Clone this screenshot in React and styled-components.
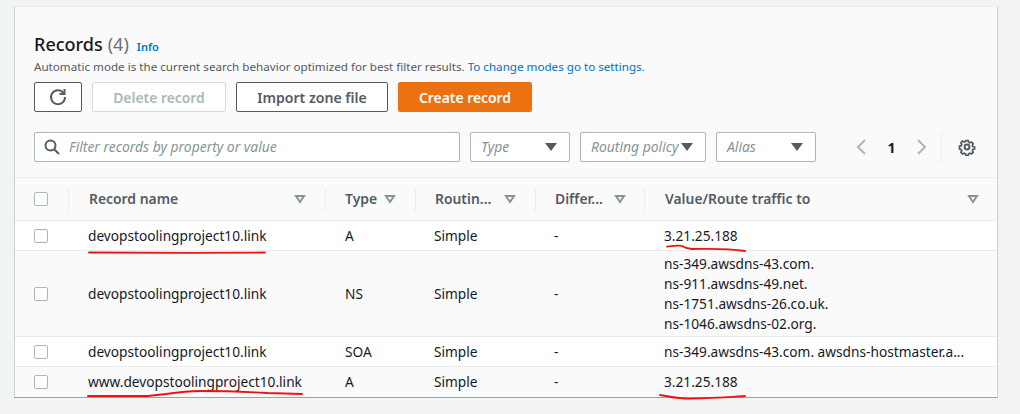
import React from "react";
import styled, { createGlobalStyle } from "styled-components";

const Global = createGlobalStyle`
  html, body { margin: 0; padding: 0; background: #f2f3f3; }
  body { font-family: "Noto Sans", "Open Sans", sans-serif; color: #16191f; }
  * { box-sizing: border-box; }
`;

const Page = styled.div`
  position: relative;
  width: 1020px;
  height: 414px;
  padding: 6px 22px 0 14px;
  overflow: hidden;
`;
const Card = styled.section`
  height: 392px;
  background: #fafafa;
  border-left: 1px solid #ccd2d2;
  border-right: 1px solid #ccd2d2;
  border-top: 1px solid #eaeded;
  border-bottom: 1px solid #9aa5a6;
`;
const Head = styled.header`
  padding: 25px 19px 0 19px;
`;
const Title = styled.div`
  display: flex;
  align-items: baseline;
  height: 24px;
  font-size: 18px;
  font-weight: 500;
  line-height: 24px;
`;
const Count = styled.span`
  margin-left: 5px;
  font-weight: 400;
  color: #687078;
`;
const InfoLink = styled.a`
  margin-left: 8px;
  font-size: 11px;
  font-weight: 600;
  color: #0073bb;
`;
const Desc = styled.p`
  margin: 2px 0 0;
  height: 17px;
  font-size: 11.63px;
  line-height: 17px;
  color: #545b64;
`;
const Anchor = styled.a`
  color: #0073bb;
`;
const Buttons = styled.div`
  display: flex;
  gap: 10px;
  margin-top: 7px;
`;
const Btn = styled.button`
  height: 30px;
  width: ${(p) => p.$w}px;
  padding: 0;
  display: flex;
  align-items: center;
  justify-content: center;
  border-radius: 2px;
  border: 1px solid ${(p) => (p.$variant === "primary" ? "#ec7211" : p.$variant === "disabled" ? "#d5dbdb" : "#545b64")};
  background: ${(p) => (p.$variant === "primary" ? "#ec7211" : "#fff")};
  color: ${(p) => (p.$variant === "primary" ? "#fff" : p.$variant === "disabled" ? "#aab7b8" : "#545b64")};
  font-family: inherit;
  font-size: ${(p) => p.$size || 13.9}px;
  font-weight: 600;
`;
const Filters = styled.div`
  display: flex;
  align-items: center;
  margin-top: 20px;
  gap: 10px;
`;
const Search = styled.div`
  flex: none;
  display: flex;
  align-items: center;
  width: 426px;
  height: 30px;
  padding-left: 9px;
  gap: 9px;
  background: #fff;
  border: 1px solid #aab7b8;
  border-radius: 2px;
`;
const Placeholder = styled.span`
  padding-bottom: 2px;
  font-size: 13.9px;
  font-style: italic;
  color: #879596;
  white-space: nowrap;
`;
const Select = styled.div`
  flex: none;
  display: flex;
  align-items: center;
  justify-content: space-between;
  width: ${(p) => p.$w}px;
  height: 30px;
  padding: 0 12px 0 10px;
  background: #fff;
  border: 1px solid #aab7b8;
  border-radius: 2px;
`;
const Caret = styled.svg`
  flex: none;
  width: 12px;
  height: 8px;
  fill: #545b64;
`;
const Pager = styled.div`
  flex: none;
  display: flex;
  align-items: center;
  height: 30px;
  margin-left: 29px;
`;
const PageNum = styled.span`
  width: 45px;
  text-align: center;
  font-size: 14px;
  font-weight: 700;
`;
const Divider = styled.span`
  width: 1px;
  height: 30px;
  background: #eaeded;
  margin: 0 16px 0 13px;
`;
const Table = styled.div`
  margin-top: 15px;
  border-top: 1px solid #eaeded;
`;
const Row = styled.div`
  display: grid;
  grid-template-columns: 53px 257px 90px 120px 109px 1fr;
  align-items: center;
  height: ${(p) => p.$h}px;
  background: ${(p) => (p.$white ? "#fff" : "transparent")};
  border-bottom: ${(p) => (p.$last ? "none" : "1px solid #eaeded")};
  font-size: 13.7px;
  color: #16191f;
`;
const CheckCell = styled.div`
  padding-left: 19px;
  display: flex;
  align-items: center;
`;
const Check = styled.span`
  display: block;
  width: 14px;
  height: 14px;
  background: #fff;
  border: 1px solid #aab7b8;
  border-radius: 2px;
`;
const HeadCell = styled.div`
  display: flex;
  align-items: center;
  justify-content: space-between;
  height: 21px;
  padding: 0 ${(p) => p.$right}px 0 ${(p) => p.$left}px;
  border-left: 1px solid #eaeded;
  font-size: 13.9px;
  font-weight: 600;
  color: #545b64;
  white-space: nowrap;
`;
const HeadLabel = styled.span`
  padding-bottom: 2px;
`;
const Cell = styled.div`
  padding-left: ${(p) => p.$left}px;
  white-space: nowrap;
`;
const Line = styled.div`
  line-height: 20px;
`;
const Ink = styled.svg`
  position: absolute;
  left: 0;
  top: 0;
  width: 1020px;
  height: 414px;
  pointer-events: none;
  fill: none;
  stroke: #ee1111;
  stroke-width: 1.8;
  stroke-linecap: round;
`;

const SortIcon = () => (
  <svg width="12" height="10" viewBox="0 0 12 10" fill="none" stroke="#879596" strokeWidth="2">
    <path d="M2 2h8L6 8z" />
  </svg>
);
const DownCaret = () => (
  <Caret viewBox="0 0 12 8"><path d="M0 0h12L6 8z" /></Caret>
);

const columns = [
  { label: "Record name", left: 20, right: 19 },
  { label: "Type", left: 19, right: 19 },
  { label: "Routin...", left: 19, right: 19 },
  { label: "Differ...", left: 19, right: 18 },
  { label: "Value/Route traffic to", left: 20, right: 18 },
];
const rows = [
  { name: "devopstoolingproject10.link", type: "A", value: ["3.21.25.188"], h: 30, white: true },
  { name: "devopstoolingproject10.link", type: "NS", value: ["ns-349.awsdns-43.com.", "ns-911.awsdns-49.net.", "ns-1751.awsdns-26.co.uk.", "ns-1046.awsdns-02.org."], h: 86 },
  { name: "devopstoolingproject10.link", type: "SOA", value: ["ns-349.awsdns-43.com. awsdns-hostmaster.a..."], h: 30, white: true },
  { name: "www.devopstoolingproject10.link", type: "A", value: ["3.21.25.188"], h: 29, last: true },
];

export default function App() {
  return (
    <>
      <Global />
      <Page>
        <Card>
          <Head>
            <Title>Records<Count>(4)</Count><InfoLink>Info</InfoLink></Title>
            <Desc>Automatic mode is the current search behavior optimized for best filter results. <Anchor>To change modes go to settings.</Anchor></Desc>
            <Buttons>
              <Btn $w={48} aria-label="Refresh">
                <svg width="18" height="18" viewBox="0 0 18 18" fill="none" stroke="#545b64" strokeWidth="2">
                  <path d="M14.5 4.8A7 7 0 1 0 16 9" />
                  <path d="M15.5 1v5h-5" />
                </svg>
              </Btn>
              <Btn $w={134} $variant="disabled">Delete record</Btn>
              <Btn $w={152} $size={14.1}>Import zone file</Btn>
              <Btn $w={134} $variant="primary">Create record</Btn>
            </Buttons>
            <Filters>
              <Search>
                <svg width="16" height="16" viewBox="0 0 16 16" fill="none" stroke="#545b64" strokeWidth="2">
                  <circle cx="6.5" cy="6.5" r="5" />
                  <path d="M10.2 10.2L15 15" />
                </svg>
                <Placeholder>Filter records by property or value</Placeholder>
              </Search>
              <Select $w={100}><Placeholder>Type</Placeholder><DownCaret /></Select>
              <Select $w={126}><Placeholder>Routing policy</Placeholder><DownCaret /></Select>
              <Select $w={100}><Placeholder>Alias</Placeholder><DownCaret /></Select>
              <Pager>
                <svg width="14" height="16" viewBox="0 0 14 16" fill="none" stroke="#aab7b8" strokeWidth="2"><path d="M10 1L3 8l7 7" /></svg>
                <PageNum>1</PageNum>
                <svg width="14" height="16" viewBox="0 0 14 16" fill="none" stroke="#aab7b8" strokeWidth="2"><path d="M4 1l7 7-7 7" /></svg>
                <Divider />
                <svg width="18" height="18" viewBox="0 0 18 18" fill="none" stroke="#545b64" strokeWidth="2">
                  <circle cx="9" cy="9" r="2.4" />
                  <path d="M7.6 1.5h2.8l.4 2 1.5.7 1.8-1 2 2-1 1.8.6 1.4 2 .5v2.4l-2 .5-.6 1.5 1 1.7-2 2-1.8-1-1.5.7-.4 2H7.6l-.4-2-1.5-.7-1.8 1-2-2 1-1.7-.6-1.5-2-.5V7.9l2-.5.6-1.4-1-1.8 2-2 1.8 1 1.5-.7z" transform="translate(1.2 1.2) scale(.87)" />
                </svg>
              </Pager>
            </Filters>
          </Head>
          <Table>
            <Row $h={43}>
              <CheckCell><Check /></CheckCell>
              {columns.map((c) => (
                <HeadCell key={c.label} $left={c.left} $right={c.right}><HeadLabel>{c.label}</HeadLabel><SortIcon /></HeadCell>
              ))}
            </Row>
            {rows.map((r, i) => (
              <Row key={i} $h={r.h} $white={r.white} $last={r.last}>
                <CheckCell><Check /></CheckCell>
                <Cell $left={20}>{r.name}</Cell>
                <Cell $left={20}>{r.type}</Cell>
                <Cell $left={19}>Simple</Cell>
                <Cell $left={19}>-</Cell>
                <Cell $left={20}>{r.value.map((v) => <Line key={v}>{v}</Line>)}</Cell>
              </Row>
            ))}
          </Table>
        </Card>
        <Ink viewBox="0 0 1020 414">
          <path d="M89 252.5C140 253 210 253 265 252.5" />
          <path d="M88 396L148 396L166 394C180 392 190 391 200 391C225 391 250 392 267 393L302 394" />
          <path d="M667 246.7C672 246 680 245.5 682 246C685 248 687 249 692 249C705 249 725 248 745 251" />
          <path d="M660 395C670 397 675 398 685 398.5C705 399 730 397 745 396" />
        </Ink>
      </Page>
    </>
  );
}
